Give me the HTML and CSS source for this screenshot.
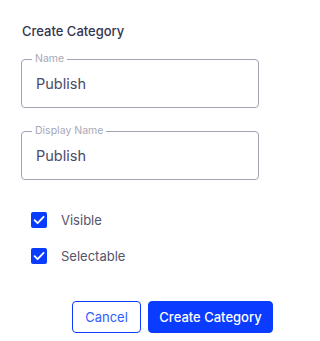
FILE: index.html
```html
<!DOCTYPE html>
<html>
<head>
<meta charset="utf-8">
<link rel="stylesheet" href="styles.css">
</head>
<body>
<div class="dialog">
  <div class="content">
    <h2 class="title">Create Category</h2>
    <div class="field">
      <span class="field-label">Name</span>
      <span class="field-value">Publish</span>
    </div>
    <div class="field field-second">
      <span class="field-label">Display Name</span>
      <span class="field-value">Publish</span>
    </div>
    <div class="checks">
      <label class="check">
        <span class="box"><svg viewBox="0 0 16 16" width="16" height="16"><path d="M3.6 8.2 L6.6 11.2 L12.6 4.8" fill="none" stroke="#fff" stroke-width="1.8" stroke-linecap="round" stroke-linejoin="round"/></svg></span>
        <span class="check-text">Visible</span>
      </label>
      <label class="check">
        <span class="box"><svg viewBox="0 0 16 16" width="16" height="16"><path d="M3.6 8.2 L6.6 11.2 L12.6 4.8" fill="none" stroke="#fff" stroke-width="1.8" stroke-linecap="round" stroke-linejoin="round"/></svg></span>
        <span class="check-text">Selectable</span>
      </label>
    </div>
  </div>
  <div class="actions">
    <button class="btn btn-outline">Cancel</button>
    <button class="btn btn-primary">Create Category</button>
  </div>
</div>
</body>
</html>
```

FILE: styles.css
```css
html, body {
  margin: 0;
  padding: 0;
  background: #ffffff;
}
body {
  font-family: Inter, "Noto Sans", sans-serif;
}
.dialog {
  width: 280px;
  height: 341px;
  background: #ffffff;
  box-sizing: border-box;
  display: flex;
  flex-direction: column;
}
.content {
  padding: 23px 21px 0 21px;
}
.title {
  margin: 0 0 0 1px;
  font-size: 13px;
  line-height: 16px;
  font-weight: 500;
  color: #36354f;
}
.field {
  position: relative;
  margin-top: 20px;
  height: 49px;
  box-sizing: border-box;
  border: 1px solid #a4a3b6;
  border-radius: 4px;
  display: flex;
  align-items: center;
  padding-left: 14px;
}
.field-second {
  margin-top: 23px;
}
.field-label {
  position: absolute;
  top: -7px;
  left: 10px;
  padding: 0 3px;
  background: #ffffff;
  font-size: 10.5px;
  line-height: 12px;
  color: #a9a8b8;
}
.field-value {
  font-size: 14.5px;
  color: #4b4a68;
}
.checks {
  margin-top: 22px;
  display: flex;
  flex-direction: column;
}
.check {
  height: 36px;
  display: flex;
  align-items: center;
  padding-left: 10px;
}
.box {
  width: 16px;
  height: 16px;
  background: #0a3cff;
  border-radius: 2px;
  display: flex;
}
.check-text {
  margin-left: 14px;
  font-size: 13px;
  color: #555469;
}
.actions {
  margin-top: 27px;
  padding: 0 7px 0 0;
  display: flex;
  justify-content: flex-end;
  gap: 7px;
}
.btn {
  height: 32px;
  box-sizing: border-box;
  border-radius: 4px;
  font-family: Inter, "Noto Sans", sans-serif;
  font-size: 13px;
  font-weight: 500;
  padding: 0;
}
.btn-outline {
  width: 69px;
  background: #ffffff;
  border: 1px solid #0a3cff;
  color: #2f5cff;
  font-weight: 400;
}
.btn-primary {
  width: 125px;
  background: #0a3cff;
  border: 1px solid #0a3cff;
  color: #ffffff;
}
```
